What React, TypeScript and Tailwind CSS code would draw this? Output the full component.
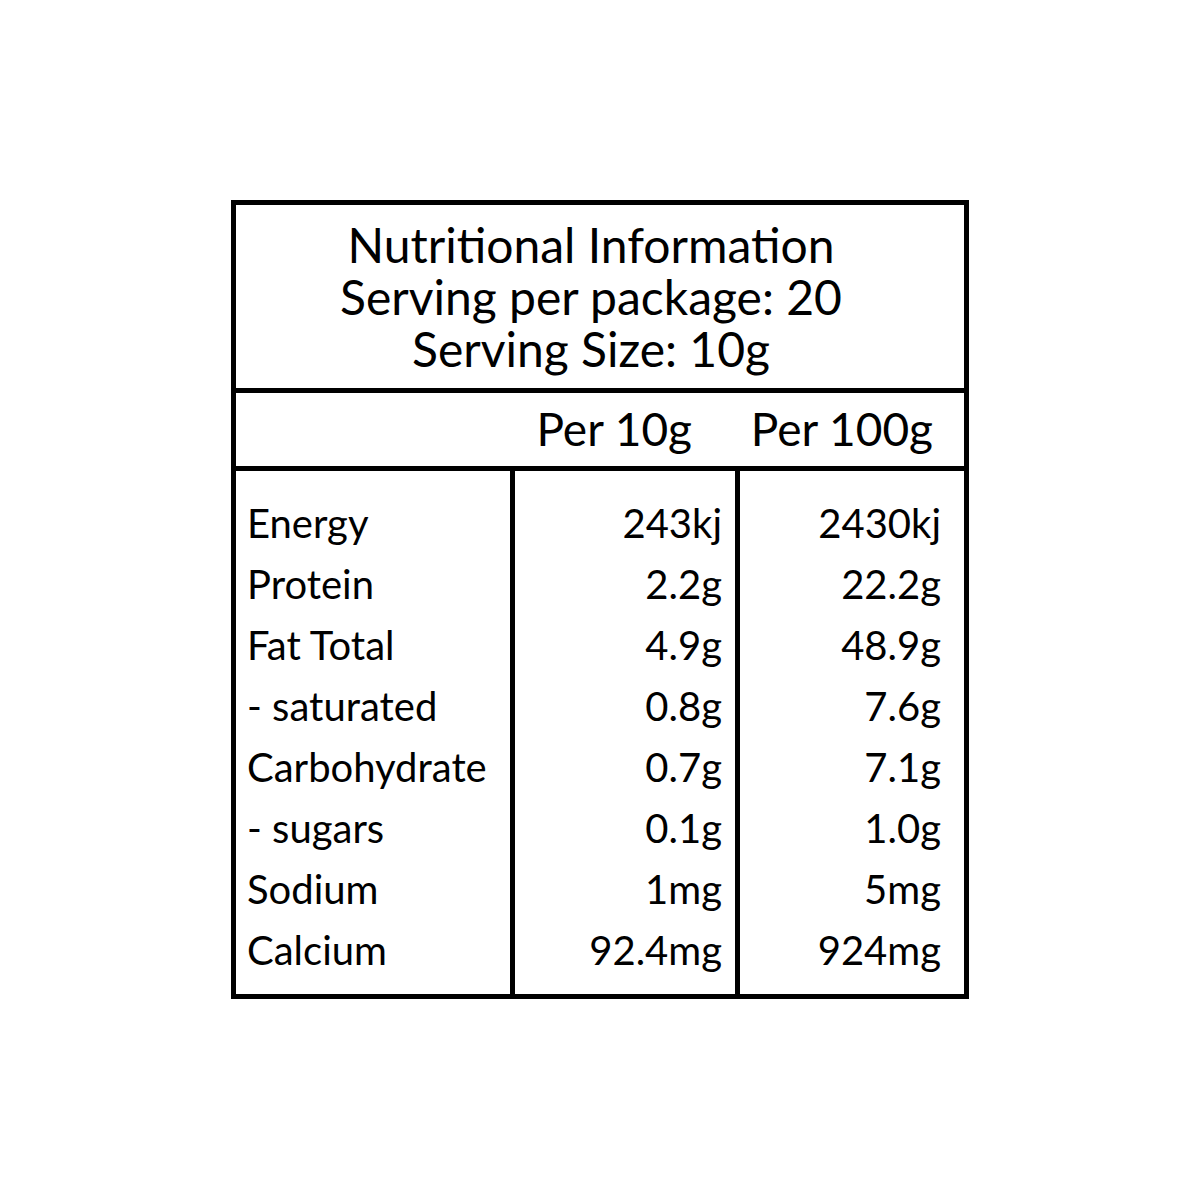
const rows: [string, string, string][] = [
  ['Energy', '243kj', '2430kj'],
  ['Protein', '2.2g', '22.2g'],
  ['Fat Total', '4.9g', '48.9g'],
  ['- saturated', '0.8g', '7.6g'],
  ['Carbohydrate', '0.7g', '7.1g'],
  ['- sugars', '0.1g', '1.0g'],
  ['Sodium', '1mg', '5mg'],
  ['Calcium', '92.4mg', '924mg'],
];

export default function App() {
  return (
    <div className="min-h-[1200px] bg-white pt-[200px] font-['Lato',sans-serif] text-black">
      <div className="mx-auto w-[738px] border-[5px] border-black">
        <div className="h-[188px] border-b-[5px] border-black pt-[14px] pr-[18px] text-center text-[48px] leading-[52px]">
          <div>Nutritional Information</div>
          <div>Serving per package: 20</div>
          <div>Serving Size: 10g</div>
        </div>

        <div className="flex h-[78px] items-center border-b-[5px] border-black pb-[3px] text-[46px]">
          <div className="w-[279px]" />
          <div className="w-[225px] pr-[48px] text-right">Per 10g</div>
          <div className="w-[224px] pr-[31px] text-right">Per 100g</div>
        </div>

        <div className="flex h-[523px] text-[40px]">
          <div className="w-[279px] border-r-[5px] border-black pt-[22px] pl-[11px]">
            {rows.map(([label]) => (
              <div key={label} className="h-[61px] leading-[61px]">{label}</div>
            ))}
          </div>
          <div className="w-[225px] border-r-[5px] border-black pt-[22px] pr-[13px] text-right">
            {rows.map(([label, a]) => (
              <div key={label} className="h-[61px] leading-[61px]">{a}</div>
            ))}
          </div>
          <div className="w-[224px] pt-[22px] pr-[23px] text-right">
            {rows.map(([label, , b]) => (
              <div key={label} className="h-[61px] leading-[61px]">{b}</div>
            ))}
          </div>
        </div>
      </div>
    </div>
  );
}
